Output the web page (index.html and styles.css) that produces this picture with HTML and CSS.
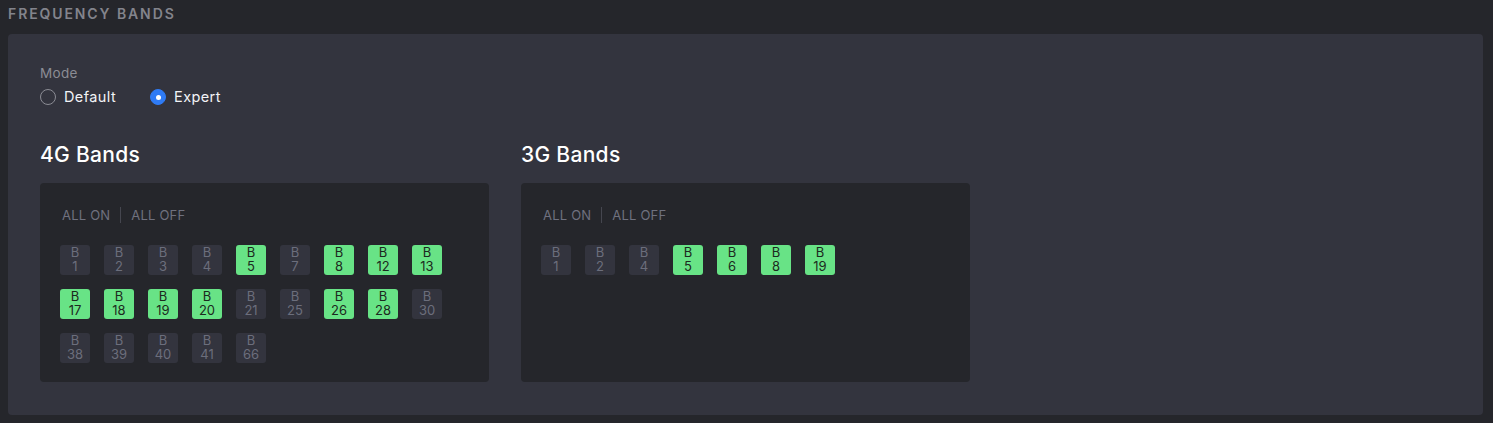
FILE: index.html
```html
<!DOCTYPE html>
<html>
<head>
<meta charset="utf-8">
<link rel="stylesheet" href="styles.css">
</head>
<body>
<div class="page">
  <div class="section-title">FREQUENCY BANDS</div>
  <div class="card">
    <div class="mode">
      <div class="mode-label">Mode</div>
      <div class="radios">
        <label class="radio"><span class="dot"></span>Default</label>
        <label class="radio checked"><span class="dot"></span>Expert</label>
      </div>
    </div>
    <div class="groups">
      <div class="group">
        <h2>4G Bands</h2>
        <div class="box">
          <div class="toggles"><span>ALL ON</span><span class="sep"></span><span>ALL OFF</span></div>
          <div class="chips">
            <div class="chip">B<br>1</div>
            <div class="chip">B<br>2</div>
            <div class="chip">B<br>3</div>
            <div class="chip">B<br>4</div>
            <div class="chip on">B<br>5</div>
            <div class="chip">B<br>7</div>
            <div class="chip on">B<br>8</div>
            <div class="chip on">B<br>12</div>
            <div class="chip on">B<br>13</div>
            <div class="chip on">B<br>17</div>
            <div class="chip on">B<br>18</div>
            <div class="chip on">B<br>19</div>
            <div class="chip on">B<br>20</div>
            <div class="chip">B<br>21</div>
            <div class="chip">B<br>25</div>
            <div class="chip on">B<br>26</div>
            <div class="chip on">B<br>28</div>
            <div class="chip">B<br>30</div>
            <div class="chip">B<br>38</div>
            <div class="chip">B<br>39</div>
            <div class="chip">B<br>40</div>
            <div class="chip">B<br>41</div>
            <div class="chip">B<br>66</div>
          </div>
        </div>
      </div>
      <div class="group">
        <h2>3G Bands</h2>
        <div class="box">
          <div class="toggles"><span>ALL ON</span><span class="sep"></span><span>ALL OFF</span></div>
          <div class="chips">
            <div class="chip">B<br>1</div>
            <div class="chip">B<br>2</div>
            <div class="chip">B<br>4</div>
            <div class="chip on">B<br>5</div>
            <div class="chip on">B<br>6</div>
            <div class="chip on">B<br>8</div>
            <div class="chip on">B<br>19</div>
          </div>
        </div>
      </div>
    </div>
  </div>
</div>
</body>
</html>
```
FILE: styles.css
```css
* { box-sizing: border-box; }
html, body { margin: 0; padding: 0; }
body {
  background: #25262b;
  font-family: Inter, "Noto Sans", sans-serif;
  color: #e8e9ee;
}
.page { padding: 6px 10px 8px 8px; }
.section-title {
  font-size: 14px;
  font-weight: 600;
  letter-spacing: 1.9px;
  color: #83848c;
  line-height: 16px;
  height: 20px;
  margin-bottom: 8px;
}
.card {
  background: #33343e;
  border-radius: 4px;
  padding: 31px 32px 33px 32px;
  height: 381px;
}
.mode-label {
  font-size: 13.5px;
  letter-spacing: 0.3px;
  color: #8b8c94;
  line-height: 16px;
}
.radios {
  display: flex;
  gap: 34px;
  margin-top: 7px;
  height: 18px;
}
.radio {
  display: flex;
  align-items: center;
  gap: 8px;
  font-size: 14.5px;
  letter-spacing: 0.4px;
  color: #f2f3f6;
  line-height: 18px;
}
.dot {
  width: 16px;
  height: 16px;
  border-radius: 50%;
  border: 1px solid #8b8c94;
  display: inline-block;
  position: relative;
}
.radio.checked .dot {
  background: #2f7bf5;
  border-color: #2f7bf5;
}
.radio.checked .dot::after {
  content: "";
  position: absolute;
  left: 4.5px;
  top: 4.5px;
  width: 5px;
  height: 5px;
  border-radius: 50%;
  background: #fff;
}
.groups {
  display: flex;
  gap: 32px;
  margin-top: 36px;
}
.group h2 {
  margin: 0 0 15px 0;
  font-size: 21px;
  font-weight: 500;
  letter-spacing: 0.3px;
  line-height: 26px;
  color: #ffffff;
}
.box {
  width: 449px;
  height: 199px;
  background: #25262b;
  border-radius: 4px;
  padding: 24px 20px 20px 20px;
}
.toggles {
  display: flex;
  align-items: center;
  gap: 10px;
  font-size: 13px;
  letter-spacing: 0.2px;
  color: #6f717f;
  line-height: 16px;
  padding-left: 2px;
  height: 16px;
}
.sep {
  width: 1px;
  height: 16px;
  background: #45464f;
}
.chips {
  display: flex;
  flex-wrap: wrap;
  gap: 14px;
  margin-top: 22px;
  width: 390px;
}
.chip {
  width: 30px;
  height: 30px;
  border-radius: 3px;
  background: #33343e;
  color: #6c6e7c;
  font-size: 13px;
  line-height: 13.5px;
  text-align: center;
  padding-top: 1px;
}
.chip.on {
  background: #68e386;
  color: #1c2a20;
}
```
